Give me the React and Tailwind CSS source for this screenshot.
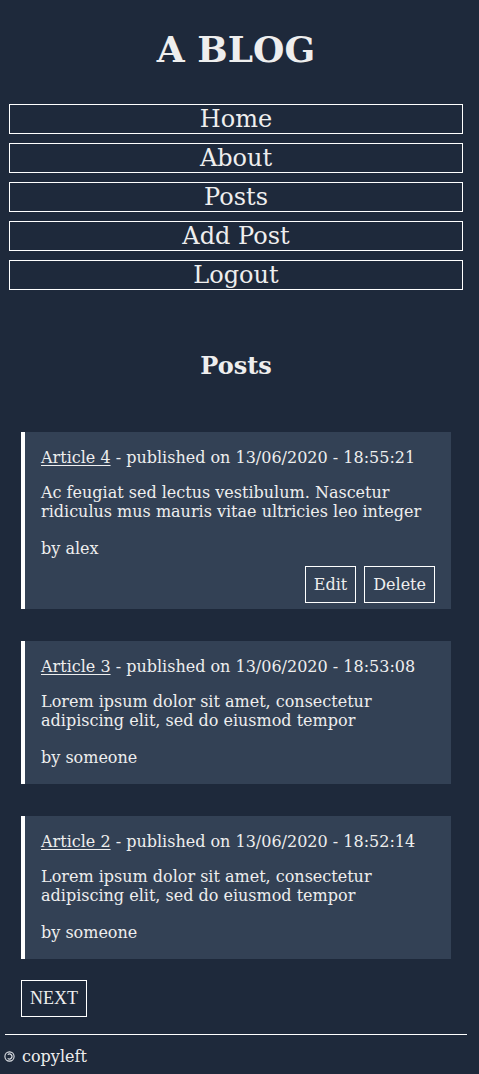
import React from "react";

const serif = { fontFamily: '"DejaVu Serif", serif' };

function Card({ title, date, body, author, actions }) {
  return (
    <div className="flex mx-[21px]">
      <div className="w-[4px] bg-white shrink-0" />
      <div className={`flex-1 bg-[#334155] pt-4 px-4 ${actions ? "pb-[6px]" : "pb-[17px]"} leading-[normal] text-[16px]`}>
        <p>
          <a href="#" className="underline underline-offset-[2px]">{title}</a>
          {" - published on " + date}
        </p>
        <p className="mt-4">{body}</p>
        <p className="mt-[18px]">by {author}</p>
        {actions && (
          <div className="flex justify-end gap-2 mt-2">
            <button className="border border-white px-2 py-2 leading-[normal]">Edit</button>
            <button className="border border-white px-2 py-2 leading-[normal]">Delete</button>
          </div>
        )}
      </div>
    </div>
  );
}

export default function App() {
  const nav = ["Home", "About", "Posts", "Add Post", "Logout"];
  return (
    <div className="min-h-screen bg-[#1e293b] text-[#eeeeee]" style={serif}>
      <div className="w-[472px] pt-[28px] pb-[8px]">
        <h1 className="text-center font-bold text-[36px] leading-[normal]">A BLOG</h1>
        <nav className="mx-[9px] mt-[34px] flex flex-col gap-[9px]">
          {nav.map((n) => (
            <a key={n} href="#" className="block border border-white text-center text-[24px] leading-[normal]">
              {n}
            </a>
          ))}
        </nav>
        <h2 className="mt-[61px] text-center font-bold text-[24px] leading-[normal]">Posts</h2>
        <div className="mt-[52px] flex flex-col gap-8">
          <Card
            title="Article 4"
            date="13/06/2020 - 18:55:21"
            body="Ac feugiat sed lectus vestibulum. Nascetur ridiculus mus mauris vitae ultricies leo integer"
            author="alex"
            actions
          />
          <Card
            title="Article 3"
            date="13/06/2020 - 18:53:08"
            body="Lorem ipsum dolor sit amet, consectetur adipiscing elit, sed do eiusmod tempor"
            author="someone"
          />
          <Card
            title="Article 2"
            date="13/06/2020 - 18:52:14"
            body="Lorem ipsum dolor sit amet, consectetur adipiscing elit, sed do eiusmod tempor"
            author="someone"
          />
        </div>
        <div className="mx-[21px] mt-[21px]">
          <button
            className="border border-white px-2 py-[7px] text-[18px] leading-[normal]"
            style={{ fontFamily: '"Liberation Serif", serif' }}
          >
            NEXT
          </button>
        </div>
        <footer className="mx-[5px] mt-[17px] border-t border-white pt-[12px] text-[16px] leading-[normal] flex items-center">
          <svg width="11" height="11" viewBox="0 0 11 11" className="shrink-0 mr-[7px] -ml-[1px]">
            <circle cx="5.5" cy="5.5" r="4.6" fill="none" stroke="#e0e3e8" strokeWidth="1.1" />
            <path d="M3.7 3.7 A2.5 2.5 0 1 1 3.7 7.3" fill="none" stroke="#e0e3e8" strokeWidth="1.1" />
          </svg>
          <span>copyleft</span>
        </footer>
      </div>
    </div>
  );
}
